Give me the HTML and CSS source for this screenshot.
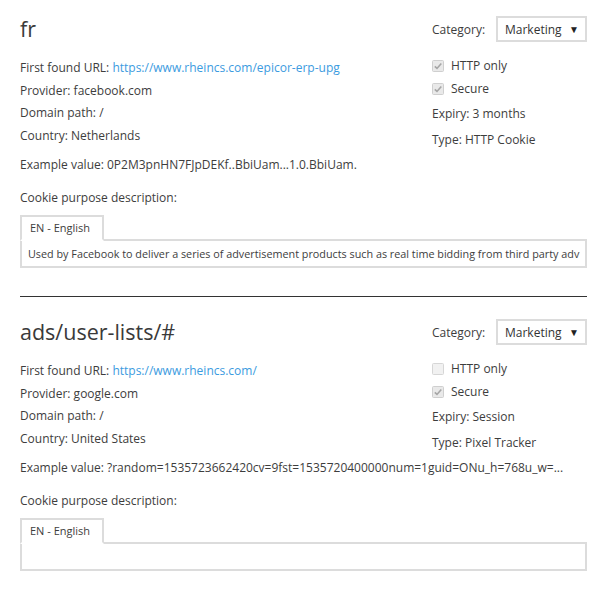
FILE: index.html
```html
<!DOCTYPE html>
<html lang="en">
<head>
<meta charset="utf-8">
<title>Cookies</title>
<link rel="stylesheet" href="styles.css">
</head>
<body>
<main class="list">
  <section class="cookie first">
    <div class="head">
      <h2 class="name">fr</h2>
      <div class="cat">
        <span class="cat-label">Category:</span>
        <div class="select"><span>Marketing</span><span class="arrow">▼</span></div>
      </div>
    </div>
    <div class="details">
      <div class="left">
        <div class="line">First found URL: <a href="#" class="link">https://www.rheincs.com/epicor-erp-upg</a></div>
        <div class="line">Provider: facebook.com</div>
        <div class="line">Domain path: /</div>
        <div class="line">Country: Netherlands</div>
      </div>
      <div class="right">
        <div class="check-row"><span class="box"><svg width="12" height="12" viewBox="0 0 12 12"><rect x="0.5" y="0.5" width="11" height="11" rx="1" fill="#e9e9e9" stroke="#cfcfcf"/><path d="M2.8 6.3 L5 8.4 L9.3 3.4" fill="none" stroke="#a6a6a6" stroke-width="1.6"/></svg></span>HTTP only</div>
        <div class="check-row"><span class="box"><svg width="12" height="12" viewBox="0 0 12 12"><rect x="0.5" y="0.5" width="11" height="11" rx="1" fill="#e9e9e9" stroke="#cfcfcf"/><path d="M2.8 6.3 L5 8.4 L9.3 3.4" fill="none" stroke="#a6a6a6" stroke-width="1.6"/></svg></span>Secure</div>
        <div class="line expiry">Expiry: 3 months</div>
        <div class="line type">Type: HTTP Cookie</div>
      </div>
    </div>
    <div class="example">Example value: 0P2M3pnHN7FJpDEKf..BbiUam...1.0.BbiUam.</div>
    <div class="label">Cookie purpose description:</div>
    <div class="tabs"><div class="tab">EN - English</div></div>
    <div class="desc">Used by Facebook to deliver a series of advertisement products such as real time bidding from third party adv</div>
  </section>
  <hr class="divider">
  <section class="cookie">
    <div class="head">
      <h2 class="name">ads/user-lists/#</h2>
      <div class="cat">
        <span class="cat-label">Category:</span>
        <div class="select"><span>Marketing</span><span class="arrow">▼</span></div>
      </div>
    </div>
    <div class="details">
      <div class="left">
        <div class="line">First found URL: <a href="#" class="link">https://www.rheincs.com/</a></div>
        <div class="line">Provider: google.com</div>
        <div class="line">Domain path: /</div>
        <div class="line">Country: United States</div>
      </div>
      <div class="right">
        <div class="check-row"><span class="box"><svg width="12" height="12" viewBox="0 0 12 12"><rect x="0.5" y="0.5" width="11" height="11" rx="1" fill="#f1f1f1" stroke="#d6d6d6"/></svg></span>HTTP only</div>
        <div class="check-row"><span class="box"><svg width="12" height="12" viewBox="0 0 12 12"><rect x="0.5" y="0.5" width="11" height="11" rx="1" fill="#e9e9e9" stroke="#cfcfcf"/><path d="M2.8 6.3 L5 8.4 L9.3 3.4" fill="none" stroke="#a6a6a6" stroke-width="1.6"/></svg></span>Secure</div>
        <div class="line expiry">Expiry: Session</div>
        <div class="line type">Type: Pixel Tracker</div>
      </div>
    </div>
    <div class="example">Example value: ?random=1535723662420cv=9fst=1535720400000num=1guid=ONu_h=768u_w=...</div>
    <div class="label">Cookie purpose description:</div>
    <div class="tabs"><div class="tab">EN - English</div></div>
    <div class="desc"></div>
  </section>
</main>
</body>
</html>
```
FILE: styles.css
```css
* { box-sizing: border-box; }
html, body { margin: 0; padding: 0; background: #fff; }
body {
  font-family: "Open Sans", "Noto Sans", sans-serif;
  font-size: 12px;
  color: #3d3d3d;
}
.list { padding: 0 24px 0 20px; }
.cookie.first { padding-top: 14px; }
.head {
  display: flex;
  align-items: center;
  height: 30px;
}
.name {
  flex: 1;
  margin: 0;
  font-size: 21.5px;
  font-weight: 400;
  line-height: 30px;
  color: #3a3a3a;
}
.cat {
  width: 155px;
  display: flex;
  align-items: center;
  justify-content: space-between;
}
.select {
  width: 91px;
  height: 26px;
  border: 2px solid #dcdcdc;
  display: flex;
  align-items: center;
  justify-content: space-between;
  padding: 0 6px 0 7px;
  color: #333;
}
.arrow { font-size: 10px; color: #222; }
.details {
  display: flex;
  justify-content: space-between;
  margin-top: 10px;
}
.left {
  width: 322px;
  padding-top: 3px;
  white-space: nowrap;
}
.line { line-height: 22.5px; }
.link { color: #3b9be0; text-decoration: none; }
.right { width: 155px; }
.check-row {
  display: flex;
  align-items: center;
  gap: 7px;
  height: 23px;
}
.box { display: flex; width: 12px; height: 12px; }
.right .line { line-height: 23px; }
.expiry { margin-top: 2px; }
.type { margin-top: 3px; }
.example {
  margin-top: 2px;
  line-height: 23px;
  white-space: nowrap;
}
.label {
  margin-top: 10px;
  line-height: 23px;
}
.tabs { display: flex; margin-top: 6px; }
.tab {
  width: 84px;
  height: 26px;
  border: 2px solid #dcdcdc;
  border-bottom: 2px solid #fff;
  margin-bottom: -2px;
  padding: 0 8px;
  font-size: 11px;
  line-height: 22px;
  background: #fff;
  position: relative;
  z-index: 1;
}
.desc {
  height: 29px;
  border: 2px solid #dcdcdc;
  padding: 0 0 0 6px;
  font-size: 10.8px;
  line-height: 25px;
  white-space: nowrap;
}
.divider {
  border: 0;
  border-top: 1px solid #333;
  margin: 28px 0 20px;
  height: 0;
}
```
